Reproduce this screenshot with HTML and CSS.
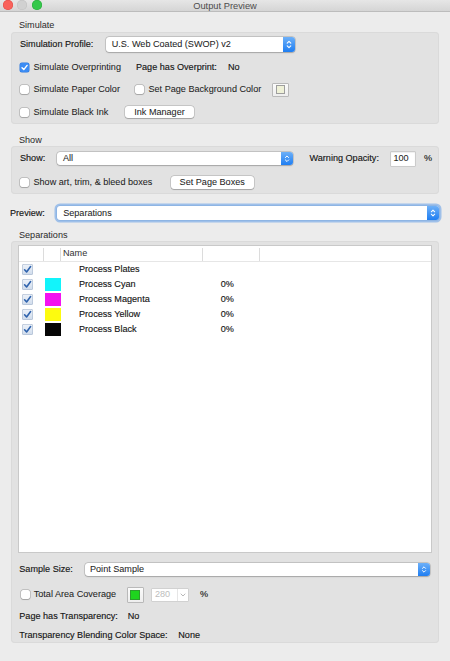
FILE: index.html
```html
<!DOCTYPE html>
<html>
<head>
<meta charset="utf-8">
<title>Output Preview</title>
<link rel="stylesheet" href="styles.css">
</head>
<body>
<header class="titlebar">
  <div class="lights">
    <span class="light red"></span><span class="light gray"></span><span class="light green"></span>
  </div>
  <div class="title">Output Preview</div>
  <div></div>
</header>
<main class="content">
  <div class="section-title st-simulate">Simulate</div>
  <section class="group g-simulate">
    <div class="row">
      <span class="label w-profile">Simulation Profile:</span>
      <div class="select s-profile">
        <span class="select-text">U.S. Web Coated (SWOP) v2</span>
        <span class="stepper"><svg viewBox="0 0 12 15" preserveAspectRatio="xMidYMid meet"><path d="M4.2 6.2 L6 4.4 L7.8 6.2 M4.2 8.8 L6 10.6 L7.8 8.8" fill="none" stroke="#fff" stroke-width="1.1" stroke-linecap="round" stroke-linejoin="round"/></svg></span>
      </div>
    </div>
    <div class="row">
      <span class="check cw-overprint"><span class="box checked"><svg viewBox="0 0 9 9"><path d="M2 4.7 L3.8 6.6 L7.1 2.4" fill="none" stroke="#fff" stroke-width="1.4" stroke-linecap="round" stroke-linejoin="round"/></svg></span>Simulate Overprinting</span>
      <span class="label lbl-overprint">Page has Overprint:</span>
      <span class="value">No</span>
    </div>
    <div class="row">
      <span class="check cw-paper"><span class="box"></span>Simulate Paper Color</span>
      <span class="check cw-bg"><span class="box"></span>Set Page Background Color</span>
      <span class="swatch"><span class="swatch-inner paper"></span></span>
    </div>
    <div class="row">
      <span class="check cw-black"><span class="box"></span>Simulate Black Ink</span>
      <span class="btn btn-ink">Ink Manager</span>
    </div>
  </section>

  <div class="section-title st-show">Show</div>
  <section class="group g-show">
    <div class="row">
      <span class="label lbl-show">Show:</span>
      <div class="select s-show">
        <span class="select-text">All</span>
        <span class="stepper"><svg viewBox="0 0 12 15" preserveAspectRatio="xMidYMid meet"><path d="M4.2 6.2 L6 4.4 L7.8 6.2 M4.2 8.8 L6 10.6 L7.8 8.8" fill="none" stroke="#fff" stroke-width="1.1" stroke-linecap="round" stroke-linejoin="round"/></svg></span>
      </div>
      <span class="label lbl-warn">Warning Opacity:</span>
      <span class="input-op">100</span>
      <span class="pct">%</span>
    </div>
    <div class="row">
      <span class="check cw-art"><span class="box"></span>Show art, trim, &amp; bleed boxes</span>
      <span class="btn btn-boxes">Set Page Boxes</span>
    </div>
  </section>

  <div class="row preview-row">
    <span class="label lbl-preview">Preview:</span>
    <div class="select s-preview">
      <span class="select-text">Separations</span>
      <span class="stepper"><svg viewBox="0 0 12 15" preserveAspectRatio="xMidYMid meet"><path d="M4.2 6.2 L6 4.4 L7.8 6.2 M4.2 8.8 L6 10.6 L7.8 8.8" fill="none" stroke="#fff" stroke-width="1.1" stroke-linecap="round" stroke-linejoin="round"/></svg></span>
    </div>
  </div>

  <div class="section-title st-sep">Separations</div>
  <section class="group g-sep">
    <div class="table">
      <div class="thead">
        <span class="th"></span>
        <span class="th"></span>
        <span class="th">Name</span>
        <span class="th"></span>
        <span class="th last"></span>
      </div>
      <div class="trow">
        <span class="tcell"><span class="tcheck"><svg viewBox="0 0 11 11"><path d="M2.6 5.8 L4.6 8 L8.6 2.6" fill="none" stroke="#2f63ad" stroke-width="1.6" stroke-linecap="round" stroke-linejoin="round"/></svg></span></span>
        <span class="tcell"></span>
        <span class="tname">Process Plates</span>
        <span class="tpct"></span>
        <span></span>
      </div>
      <div class="trow">
        <span class="tcell"><span class="tcheck"><svg viewBox="0 0 11 11"><path d="M2.6 5.8 L4.6 8 L8.6 2.6" fill="none" stroke="#2f63ad" stroke-width="1.6" stroke-linecap="round" stroke-linejoin="round"/></svg></span></span>
        <span class="tcell"><span class="tswatch cyan"></span></span>
        <span class="tname">Process Cyan</span>
        <span class="tpct">0%</span>
        <span></span>
      </div>
      <div class="trow">
        <span class="tcell"><span class="tcheck"><svg viewBox="0 0 11 11"><path d="M2.6 5.8 L4.6 8 L8.6 2.6" fill="none" stroke="#2f63ad" stroke-width="1.6" stroke-linecap="round" stroke-linejoin="round"/></svg></span></span>
        <span class="tcell"><span class="tswatch magenta"></span></span>
        <span class="tname">Process Magenta</span>
        <span class="tpct">0%</span>
        <span></span>
      </div>
      <div class="trow">
        <span class="tcell"><span class="tcheck"><svg viewBox="0 0 11 11"><path d="M2.6 5.8 L4.6 8 L8.6 2.6" fill="none" stroke="#2f63ad" stroke-width="1.6" stroke-linecap="round" stroke-linejoin="round"/></svg></span></span>
        <span class="tcell"><span class="tswatch yellow"></span></span>
        <span class="tname">Process Yellow</span>
        <span class="tpct">0%</span>
        <span></span>
      </div>
      <div class="trow">
        <span class="tcell"><span class="tcheck"><svg viewBox="0 0 11 11"><path d="M2.6 5.8 L4.6 8 L8.6 2.6" fill="none" stroke="#2f63ad" stroke-width="1.6" stroke-linecap="round" stroke-linejoin="round"/></svg></span></span>
        <span class="tcell"><span class="tswatch black"></span></span>
        <span class="tname">Process Black</span>
        <span class="tpct">0%</span>
        <span></span>
      </div>
    </div>

    <div class="row b-row sample-row">
      <span class="label lbl-sample">Sample Size:</span>
      <div class="select s-sample">
        <span class="select-text">Point Sample</span>
        <span class="stepper"><svg viewBox="0 0 12 15" preserveAspectRatio="xMidYMid meet"><path d="M4.2 6.2 L6 4.4 L7.8 6.2 M4.2 8.8 L6 10.6 L7.8 8.8" fill="none" stroke="#fff" stroke-width="1.1" stroke-linecap="round" stroke-linejoin="round"/></svg></span>
      </div>
    </div>
    <div class="row b-row tac-row">
      <span class="check cw-tac"><span class="box"></span>Total Area Coverage</span>
      <span class="swatch swatch-green"><span class="swatch-inner green"></span></span>
      <span class="combo"><span class="combo-text">280</span><span class="combo-arrow"><svg viewBox="0 0 8 8"><path d="M2 3 L4 5 L6 3" fill="none" stroke="#b8b8b8" stroke-width="1" stroke-linecap="round" stroke-linejoin="round"/></svg></span></span>
      <span class="pct pct2">%</span>
    </div>
    <div class="row b-row pht-row">
      <span class="label lbl-pht">Page has Transparency:</span>
      <span class="value">No</span>
    </div>
    <div class="row b-row tbcs-row">
      <span class="label lbl-tbcs">Transparency Blending Color Space:</span>
      <span class="value">None</span>
    </div>
  </section>
</main>
</body>
</html>
```

FILE: styles.css
```css
* { box-sizing: border-box; }

html, body { margin: 0; }

body {
  width: 450px;
  height: 661px;
  overflow: hidden;
  background: #ececec;
  font-family: "Liberation Sans", Arial, sans-serif;
  font-size: 9.1px;
  line-height: 11px;
  color: #1e1e1e;
  -webkit-text-stroke: 0.06px #1e1e1e;
}

/* Title bar */
.titlebar {
  height: 12px;
  display: grid;
  grid-template-columns: 1fr auto 1fr;
  align-items: start;
  background: linear-gradient(#e6e6e6, #d5d5d5);
  border-bottom: 1px solid #bcbcbc;
}

.lights {
  display: flex;
  gap: 4.6px;
  padding-left: 2.7px;
}

.light {
  width: 10px;
  height: 10px;
  border-radius: 50%;
}
.light.red { background: #f9625b; box-shadow: inset 0 0 0 0.5px #df4a44; }
.light.gray { background: #d1d1d1; box-shadow: inset 0 0 0 0.5px #c0c0c0; }
.light.green { background: #35c84b; box-shadow: inset 0 0 0 0.5px #27a83a; }

.title {
  color: #4c4c4c;
  font-size: 9.3px;
  padding-top: 0.5px;
  -webkit-text-stroke: 0;
}

/* Content */
.content {
  padding: 0 11px;
}

.section-title {
  padding-left: 8px;
  color: #2a2a2a;
  -webkit-text-stroke: 0;
}
.st-simulate { padding-top: 8px; padding-bottom: 1px; }
.st-show { padding-top: 11px; }
.st-sep { padding-top: 10px; }

.group {
  background: #e2e2e2;
  border-radius: 4px;
  box-shadow: inset 0 0 0 1px #dadada;
}

.g-simulate {
  height: 92px;
  padding: 5px 9px 0;
  display: grid;
  grid-auto-rows: 15px;
  row-gap: 7.5px;
  align-content: start;
}

.g-show {
  height: 48px;
  padding: 5px 9px 0;
  display: grid;
  grid-auto-rows: 15px;
  row-gap: 9px;
  align-content: start;
}

.row {
  display: flex;
  align-items: center;
  white-space: nowrap;
}

.label {
  color: #151515;
  -webkit-text-stroke: 0.14px #151515;
}
.value { color: #151515; -webkit-text-stroke: 0.14px #151515; }

/* Selects */
.select {
  display: flex;
  align-items: center;
  background: #fff;
  border-radius: 3px;
  padding-left: 6px;
  box-shadow: 0 0 0 0.5px rgba(0, 0, 0, 0.22), 0 0.5px 1.5px rgba(0, 0, 0, 0.18);
}
.select-text { flex: 1; }
.stepper {
  width: 12px;
  align-self: stretch;
  background: linear-gradient(#6db0f8, #1f7ef2);
  border-radius: 0 3px 3px 0;
  display: flex;
  align-items: center;
  justify-content: center;
}
.stepper svg { width: 12px; height: 100%; display: block; }

.w-profile { width: 86px; }
.s-profile { width: 189px; height: 15px; padding-left: 5.7px; }

/* Checkboxes */
.check {
  display: flex;
  align-items: center;
}
.box {
  width: 9px;
  height: 9px;
  margin-right: 4.5px;
  flex: none;
  background: #fff;
  border-radius: 2px;
  box-shadow: 0 0 0 0.5px rgba(0, 0, 0, 0.28), 0 0.5px 1px rgba(0, 0, 0, 0.15);
}
.box.checked {
  background: #3b8cf4;
  box-shadow: 0 0 0 0.5px #2f78db;
}
.box svg { display: block; width: 9px; height: 9px; }

.cw-overprint { width: 116px; }
.lbl-overprint { width: 92px; }
.cw-paper { width: 115px; }
.cw-bg { width: 136.7px; }
.cw-black { width: 105px; }

/* Buttons */
.btn {
  height: 12px;
  background: #fff;
  border-radius: 3px;
  box-shadow: 0 0 0 0.5px rgba(0, 0, 0, 0.22), 0 0.5px 1px rgba(0, 0, 0, 0.18);
  display: flex;
  align-items: center;
  justify-content: center;
}
.btn-ink { width: 69px; }
.btn-boxes { width: 83px; height: 13px; }

/* Swatches */
.swatch {
  width: 17px;
  height: 14px;
  background: linear-gradient(#fbfbfb, #eeeeee);
  border: 1px solid #b9b9b9;
  border-radius: 1px;
  display: flex;
  align-items: center;
  justify-content: center;
}
.swatch-inner {
  width: 9px;
  height: 9px;
  border: 1px solid #9e9e9e;
}
.swatch-inner.paper { background: #eff1d8; }
.swatch-green { height: 16px; width: 17.4px; }
.swatch-inner.green { width: 10px; height: 10px; background: #1ed41e; border-color: #2c9c2c; }

/* Show group */
.lbl-show { width: 37px; }
.s-show { width: 235.5px; height: 13.5px; }
.lbl-warn { margin-left: 17px; width: 81px; }
.input-op {
  width: 24px;
  height: 14px;
  background: #fff;
  padding-left: 3px;
  display: flex;
  align-items: center;
  box-shadow: 0 0 0 0.5px rgba(0, 0, 0, 0.2), inset 0 0.5px 1px rgba(0, 0, 0, 0.12);
}
.pct { margin-left: 9.5px; -webkit-text-stroke: 0.14px #151515; }
.cw-art { width: 150.7px; }

/* Preview */
.preview-row {
  margin-top: 12px;
  margin-left: -1px;
  height: 14px;
}
.lbl-preview { width: 47.3px; }
.s-preview {
  width: 382.7px;
  height: 14px;
  box-shadow: 0 0 0 0.5px #7fa9e0, 0 0 0 2.5px rgba(108, 164, 232, 0.6);
}

/* Separations */
.g-sep {
  height: 402px;
  padding: 4px 7px 0 7.3px;
}

.table {
  height: 308px;
  background: #fff;
  border: 1px solid #c9c9c9;
}

.thead,
.trow {
  display: grid;
  grid-template-columns: 24.4px 17.3px 142.3px 56.7px 1fr;
}

.thead {
  height: 16px;
  border-bottom: 1px solid #e6e6e6;
}
.th {
  margin-top: 2px;
  padding-left: 2px;
  border-right: 1px solid #dcdcdc;
  color: #333;
  -webkit-text-stroke: 0;
}
.th.last { border-right: none; }

.trow {
  height: 15px;
  align-items: center;
}
.tcell { display: flex; align-items: center; }
.tcheck {
  width: 11px;
  height: 11px;
  margin-left: 3px;
  border-radius: 2px;
  background: linear-gradient(#eef3fa, #cfdbeb);
  box-shadow: inset 0 0 0 0.5px #9fb0c8;
}
.tcheck svg { display: block; width: 11px; height: 11px; }
.tswatch {
  width: 15.7px;
  height: 13px;
  margin-left: 1.3px;
}
.tswatch.cyan { background: #12f4fb; }
.tswatch.magenta { background: #f312f0; }
.tswatch.yellow { background: #fdfb0f; }
.tswatch.black { background: #060606; }
.tname { padding-left: 18px; color: #151515; -webkit-text-stroke: 0.14px #151515; }
.tpct { padding-left: 17.4px; color: #151515; -webkit-text-stroke: 0.14px #151515; }

.b-row { padding-left: 1px; }
.sample-row { margin-top: 9.5px; height: 13px; }
.lbl-sample { width: 65.7px; }
.s-sample { width: 345px; height: 13px; padding-left: 5px; }

.tac-row { margin-top: 11px; height: 16px; padding-left: 2.4px; }
.tac-row .box { margin-right: 4px; }
.cw-tac { width: 105.9px; }
.combo {
  margin-left: 8.3px;
  width: 35.3px;
  height: 12px;
  background: #fff;
  display: flex;
  align-items: center;
  padding-left: 2.7px;
  color: #bdbdbd;
  -webkit-text-stroke: 0;
  box-shadow: 0 0 0 0.5px rgba(0, 0, 0, 0.15);
}
.combo-text { flex: 1; }
.combo-arrow {
  width: 11px;
  height: 100%;
  border-left: 1px solid #e6e6e6;
  display: flex;
  align-items: center;
  justify-content: center;
}
.combo-arrow svg { width: 8px; height: 8px; display: block; }
.pct2 { margin-left: 12.4px; }

.pht-row { margin-top: 7.5px; height: 13px; }
.lbl-pht { width: 108.4px; }
.tbcs-row { margin-top: 5.5px; height: 13px; }
.lbl-tbcs { width: 159px; }
```
